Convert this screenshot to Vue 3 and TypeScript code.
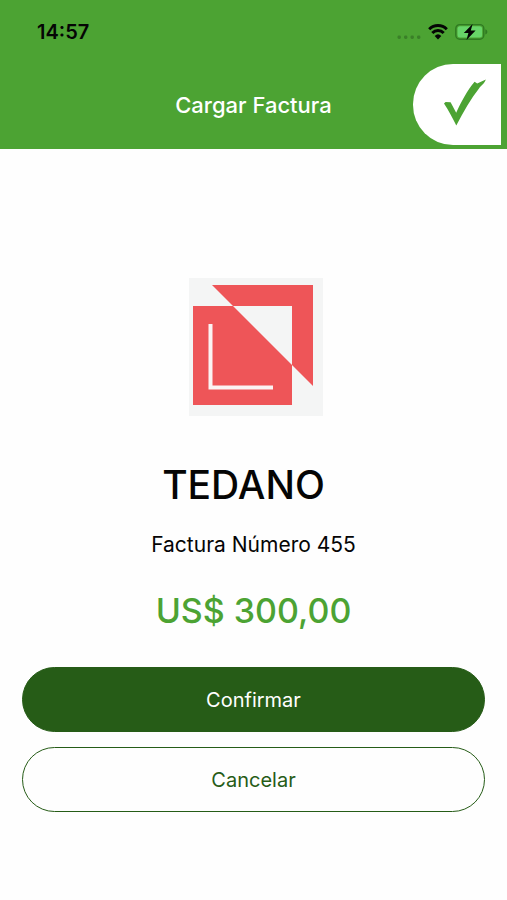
<script setup lang="ts">
import { ref } from 'vue'

interface Invoice {
  merchant: string
  number: number
  amount: number
}

const invoice = ref<Invoice>({ merchant: 'TEDANO', number: 455, amount: 300 })

const formatAmount = (value: number): string => `US$ ${value.toFixed(2).replace('.', ',')}`
</script>

<template>
  <div class="screen">
    <header class="header">
      <div class="status">
        <span class="time">14:57</span>
        <div class="indicators">
          <svg class="signal" width="24" height="6" viewBox="0 0 24 6" aria-hidden="true">
            <rect x="0.5" y="1.5" width="3.4" height="3.4" rx="1.4" />
            <rect x="7" y="1.5" width="3.4" height="3.4" rx="1.4" />
            <rect x="13.5" y="1.5" width="3.4" height="3.4" rx="1.4" />
            <rect x="20" y="1.5" width="3.4" height="3.4" rx="1.4" />
          </svg>
          <svg class="wifi" width="20" height="16" viewBox="0 0 20 16" aria-hidden="true">
            <path d="M1.2 5.2a12.6 12.6 0 0 1 17.6 0" />
            <path d="M4.3 9a8 8 0 0 1 11.4 0" />
            <path class="wifi-dot" d="M6.7 11.9a4.8 4.8 0 0 1 6.6 0L10 15.4z" />
          </svg>
          <svg class="battery" width="33" height="18" viewBox="0 0 33 18" aria-hidden="true">
            <rect class="battery-case" x="0.8" y="1.6" width="28" height="14.6" rx="4" />
            <rect class="battery-fill" x="2.5" y="3.3" width="24.6" height="11.2" rx="2.5" />
            <path class="battery-tip" d="M30.3 6.3v5.2c2.7-.8 2.7-4.4 0-5.2z" />
            <path class="bolt" d="M17.6 1 8.8 10h4.6L11.5 17 20.6 7.6h-4.8z" />
          </svg>
        </div>
      </div>
      <div class="navbar">
        <h1 class="title">Cargar Factura</h1>
        <button class="accept" type="button" aria-label="Aceptar">
          <svg width="44" height="48" viewBox="0 0 44 48" aria-hidden="true">
            <path d="M1 24.6 2.6 23l5 .2 5.6 10.6C18.4 22.6 24.4 11 31.6 2.8L34.2 4.6 38.5 2.6 42.8.6C41.8 4.4 38.2 6.6 36 9.4 28 19.4 20.6 32 13.3 46.6 9.4 38.6 5.6 31.6 1 24.6z" />
          </svg>
        </button>
      </div>
    </header>

    <main class="content">
      <svg class="logo" width="134" height="138" viewBox="0 0 134 138" role="img" aria-label="TEDANO">
        <rect class="logo-back" width="134" height="138" />
        <path class="logo-shape" d="M23 7h101v101L103 87V28H44z" />
        <path class="logo-shape" d="M4 28h40l59 59v40H4z" />
        <path class="logo-line" d="M21.5 46v63.5H84" />
      </svg>
      <h2 class="merchant">{{ invoice.merchant }}</h2>
      <p class="number">Factura Número {{ invoice.number }}</p>
      <p class="amount">{{ formatAmount(invoice.amount) }}</p>
      <div class="actions">
        <button class="action confirm" type="button">Confirmar</button>
        <button class="action cancel" type="button">Cancelar</button>
      </div>
    </main>
  </div>
</template>

<style>
body {
  margin: 0;
  background: #fefefe;
}
</style>

<style scoped>
.screen {
  min-height: 100vh;
  font-family: Inter, "Liberation Sans", sans-serif;
  color: #050505;
}

.header {
  padding-bottom: 4px;
  background: #4ca333;
}

.status {
  display: flex;
  align-items: center;
  justify-content: space-between;
  height: 64px;
  padding: 0 19px 0 37px;
}

.time {
  font-size: 20px;
  font-weight: 600;
  line-height: 24px;
}

.indicators {
  display: flex;
  align-items: center;
  gap: 7px;
}

.signal {
  margin-top: 10px;
  fill: #3a8028;
}

.wifi {
  fill: none;
  stroke: #050505;
  stroke-width: 3;
}

.wifi .wifi-dot {
  fill: #050505;
  stroke: none;
}

.battery-case {
  fill: none;
  stroke: #2f7a22;
  stroke-width: 1.4;
}

.battery-fill {
  fill: #67d568;
}

.battery-tip {
  fill: #2f7a22;
}

.bolt {
  fill: #050505;
}

.navbar {
  display: grid;
  grid-template-columns: 1fr auto 1fr;
  align-items: center;
  padding: 0 6px;
}

.title {
  grid-column: 2;
  margin: 0;
  font-size: 22px;
  font-weight: 500;
  line-height: 28px;
  color: #fff;
}

.accept {
  display: flex;
  align-items: center;
  justify-content: flex-end;
  justify-self: end;
  width: 88px;
  height: 81px;
  padding: 0 14px 4px 0;
  border: 0;
  border-radius: 40px 0 0 40px;
  background: #fff;
  fill: #4ca333;
  cursor: pointer;
}

.content {
  display: flex;
  flex-direction: column;
  align-items: center;
  padding: 129px 22px 32px;
}

.logo {
  padding-left: 4px;
}

.logo-back {
  fill: #f4f5f5;
}

.logo-shape {
  fill: #ee5558;
}

.logo-line {
  fill: none;
  stroke: #fbf3f3;
  stroke-width: 4;
}

.merchant {
  margin: 45px 0 0;
  padding-right: 20px;
  font-size: 39px;
  font-weight: 500;
  line-height: 48px;
}

.number {
  margin: 22px 0 0;
  font-size: 21px;
  line-height: 28px;
}

.amount {
  margin: 32px 0 0;
  font-size: 34px;
  font-weight: 500;
  line-height: 40px;
  color: #4ca333;
}

.actions {
  display: flex;
  flex-direction: column;
  gap: 15px;
  width: 100%;
  margin-top: 36px;
}

.action {
  height: 65px;
  border: 1px solid #265c17;
  border-radius: 33px;
  font-family: inherit;
  font-size: 20px;
  font-weight: 400;
  cursor: pointer;
}

.confirm {
  background: #265c17;
  color: #fff;
}

.cancel {
  background: transparent;
  color: #265c17;
}
</style>
